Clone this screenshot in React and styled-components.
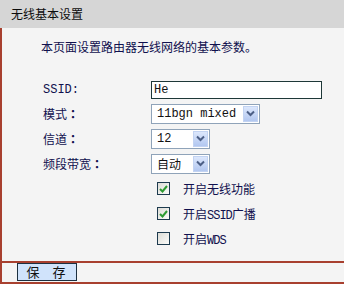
import React from "react";
import styled, { createGlobalStyle } from "styled-components";

const Global = createGlobalStyle`
  html, body { margin: 0; padding: 0; background: #f4f4f4; }
  body { font-family: "Liberation Mono", "Noto Sans CJK SC", monospace; font-size: 12px; color: #10104e; }
`;

const Panel = styled.div`
  width: 344px;
  height: 284px;
  display: flex;
  flex-direction: column;
  background: #f4f4f4;
`;

const Header = styled.div`
  height: 28px;
  line-height: 28px;
  padding-left: 11px;
  background: #d6d6d6;
  color: #0c0c0c;
  font-family: "Noto Sans CJK SC", sans-serif;
  font-size: 12px;
`;

const Content = styled.div`
  height: 230px;
  border-left: 2px solid #a8402f;
  border-bottom: 2px solid #a8402f;
  padding: 12px 0 0 39px;
  display: flex;
  flex-direction: column;
`;

const Intro = styled.div`
  height: 14px;
  line-height: 14px;
  font-family: "Noto Sans CJK SC", sans-serif;
  margin-bottom: 24px;
`;

const Row = styled.div`
  display: grid;
  grid-template-columns: 110px 1fr;
  align-items: center;
  height: ${(p) => p.$h || 25}px;
`;

const Label = styled.div`
  padding-left: 2px;
`;

const Colon = styled.span`
  font-family: "Noto Sans CJK TC", sans-serif;
  font-weight: bold;
`;

const TextInput = styled.div`
  width: 167px;
  height: 16px;
  line-height: 16px;
  border: 1px solid #1e3838;
  background: #fff;
  padding-left: 2px;
  color: #111;
  font-size: 12px;
  box-sizing: content-box;
`;

const Select = styled.div`
  width: ${(p) => p.$w}px;
  height: 18px;
  border: 1px solid #8fa3b9;
  background: #fff;
  display: flex;
  align-items: center;
  justify-content: space-between;
  color: #111;
  box-sizing: content-box;
`;

const SelectValue = styled.span`
  padding-left: 5px;
  font-family: ${(p) => (p.$cjk ? '"Noto Sans CJK SC", sans-serif' : '"Liberation Mono", monospace')};
  font-size: 12px;
`;

const ArrowBtn = styled.div`
  width: 15px;
  height: 16px;
  margin-right: 1px;
  background: linear-gradient(#dce7fc, #b2c7f0);
  border: 1px solid #c2d3f2;
  box-sizing: border-box;
  display: flex;
  align-items: center;
  justify-content: center;
`;

const CheckRow = styled.div`
  display: flex;
  align-items: center;
  gap: 13px;
  padding-left: 6px;
`;

const Box = styled.div`
  width: 13px;
  height: 13px;
  box-sizing: border-box;
  border: 1px solid #1d3a4e;
  background: linear-gradient(135deg, #dcdcd6, #fbfbf9);
  display: flex;
  align-items: center;
  justify-content: center;
`;

const CheckText = styled.span`
  font-family: "Noto Sans CJK SC", sans-serif;
`;

const Mono = styled.span`
  font-family: "Liberation Mono", monospace;
  letter-spacing: -1px;
`;

const Footer = styled.div`
  height: 20px;
  border-left: 2px solid #a8402f;
  border-bottom: 2px solid #a8402f;
  padding-left: 15px;
  display: flex;
  align-items: center;
`;

const SaveButton = styled.button`
  width: 60px;
  height: 18px;
  margin: 0;
  padding: 0;
  background: #d0e3fb;
  border: 1px solid #1c3040;
  font-family: "Noto Sans CJK SC", sans-serif;
  font-size: 13px;
  line-height: 16px;
  color: #111;
  letter-spacing: 2px;
  word-spacing: 6px;
`;

const Chevron = () => (
  <svg width="9" height="7" viewBox="0 0 9 7">
    <path d="M1 1.5 L4.5 5 L8 1.5" fill="none" stroke="#4c5f86" strokeWidth="2" />
  </svg>
);

const Tick = () => (
  <svg width="9" height="8" viewBox="0 0 9 8">
    <path d="M1 4 L3.5 6.5 L8 1" fill="none" stroke="#2e9b32" strokeWidth="2" />
  </svg>
);

const Dropdown = ({ w, value, cjk }) => (
  <Select $w={w}>
    <SelectValue $cjk={cjk}>{value}</SelectValue>
    <ArrowBtn>
      <Chevron />
    </ArrowBtn>
  </Select>
);

const Check = ({ checked, children }) => (
  <CheckRow>
    <Box>{checked && <Tick />}</Box>
    <CheckText>{children}</CheckText>
  </CheckRow>
);

export default function App() {
  return (
    <>
      <Global />
      <Panel>
        <Header>无线基本设置</Header>
        <Content>
          <Intro>本页面设置路由器无线网络的基本参数。</Intro>
          <Row $h={23}>
            <Label>SSID:</Label>
            <TextInput>He</TextInput>
          </Row>
          <Row>
            <Label>模式<Colon>：</Colon></Label>
            <Dropdown w={107} value="11bgn mixed" />
          </Row>
          <Row>
            <Label>信道<Colon>：</Colon></Label>
            <Dropdown w={57} value="12" />
          </Row>
          <Row>
            <Label>频段带宽<Colon>：</Colon></Label>
            <Dropdown w={57} value="自动" cjk />
          </Row>
          <Row>
            <span />
            <Check checked>开启无线功能</Check>
          </Row>
          <Row>
            <span />
            <Check checked>
              开启<Mono>SSID</Mono>广播
            </Check>
          </Row>
          <Row>
            <span />
            <Check>
              开启<Mono>WDS</Mono>
            </Check>
          </Row>
        </Content>
        <Footer>
          <SaveButton>保 存</SaveButton>
        </Footer>
      </Panel>
    </>
  );
}
